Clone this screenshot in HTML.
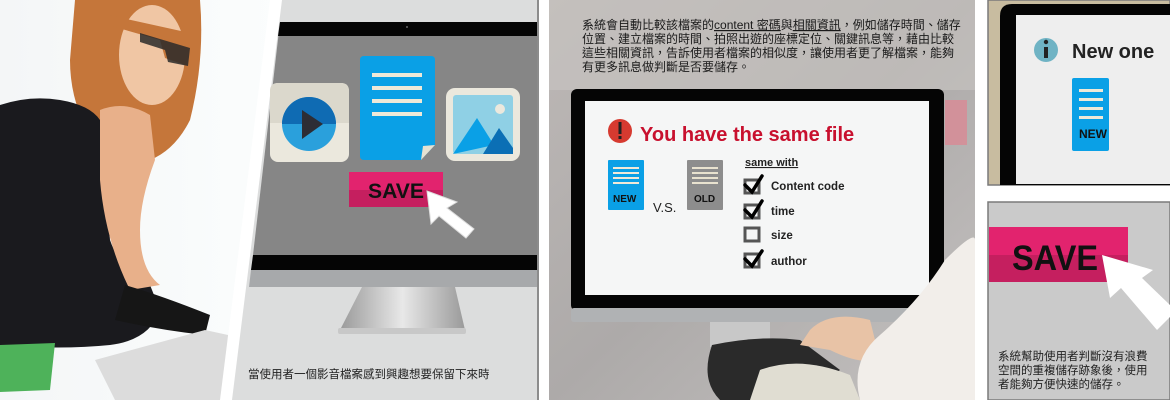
<!DOCTYPE html>
<html><head><meta charset="utf-8"><style>
html,body{margin:0;padding:0;width:1170px;height:400px;overflow:hidden;background:#fff}
svg{display:block}
text{font-family:"Liberation Sans","Noto Sans CJK TC",sans-serif}
</style></head><body>
<svg width="1170" height="400" viewBox="0 0 1170 400" xmlns="http://www.w3.org/2000/svg">
<defs>
<linearGradient id="bg1" x1="0" y1="0" x2="1" y2="0"><stop offset="0" stop-color="#f4f6f7"/><stop offset="1" stop-color="#fbfdfd"/></linearGradient>
<linearGradient id="stand" x1="0" y1="0" x2="1" y2="0"><stop offset="0" stop-color="#9a9a9a"/><stop offset=".5" stop-color="#e8e8e8"/><stop offset="1" stop-color="#9a9a9a"/></linearGradient>
<linearGradient id="blur" x1="0" y1="0" x2="1" y2="1"><stop offset="0" stop-color="#bdb8b6"/><stop offset=".5" stop-color="#adaaa9"/><stop offset="1" stop-color="#c4c1c0"/></linearGradient>
</defs>
<!-- Panel 1 photo -->
<rect x="0" y="0" width="280" height="400" fill="url(#bg1)"/>
<path d="M75 0 L200 0 Q205 60 190 120 Q175 150 150 160 L100 150 Q70 110 70 60Z" fill="#c5763a"/>
<ellipse cx="152" cy="55" rx="33" ry="50" fill="#f0c6a4"/>
<path d="M108 15 L190 33 L188 66 L165 58 L160 40 L108 25Z" fill="#c5763a"/>
<path d="M140 33 L190 48 L188 66 L168 62 L165 50 L140 42Z" fill="#2a2a2a" opacity=".85"/>
<path d="M0 105 Q30 95 60 100 Q90 105 100 120 Q105 180 110 240 Q120 270 150 285 L160 310 Q150 340 110 345 Q60 350 0 345Z" fill="#1a1a1e"/>
<path d="M100 110 Q125 100 150 115 L155 160 Q140 200 140 230 Q140 270 160 285 L130 290 Q105 240 100 180Z" fill="#e8b08a"/>
<path d="M125 285 Q160 295 210 315 L205 335 Q160 330 115 320Z" fill="#161616"/>
<path d="M95 360 L205 330 L228 335 L226 400 L115 400Z" fill="#dcdcdc"/>
<path d="M0 345 L55 343 L50 390 L0 392Z" fill="#4eb25a"/>
<!-- white slant stripe -->
<polygon points="270,0 282,0 232,400 220,400" fill="#fff"/>
<!-- Panel 2 -->
<polygon points="282,0 538,0 538,400 232,400" fill="#dcdddd"/>
<polygon points="280,22 538,22 538,255 253,255" fill="#868686"/>
<polygon points="280,22 538,22 538,36 278,36" fill="#050505"/>
<circle cx="407" cy="27" r="1" fill="#666"/>
<polygon points="253,255 538,255 538,270 251,270" fill="#050505"/>
<polygon points="251,270 538,270 538,287 249,287" fill="#a7a9ab"/>
<polygon points="362,287 455,287 465,330 340,330" fill="url(#stand)"/>
<rect x="338" y="328" width="128" height="6" rx="2" fill="#c8c8c8"/>
<rect x="537" y="0" width="2" height="400" fill="#8c8c8c"/>
<!-- video icon -->
<rect x="270" y="83" width="79" height="79" rx="8" fill="#ebe8dd"/>
<path d="M270 123 H349 V91 Q349 83 341 83 H278 Q270 83 270 91Z" fill="#dbd8cc"/>
<circle cx="309" cy="124" r="27" fill="#2aa0dc"/>
<path d="M282 124 A27 27 0 0 1 336 124Z" fill="#0f6bb3"/>
<polygon points="302,110 302,139 323,124" fill="#2d2d35"/>
<!-- doc icon -->
<path d="M364 56 H431 Q435 56 435 60 V145 L421 160 H364 Q360 160 360 156 V60 Q360 56 364 56Z" fill="#0aa0e6"/>
<polygon points="421,160 435,145 423,146" fill="#e6e2d2"/>
<g fill="#efe9d8"><rect x="372" y="73" width="50" height="4"/><rect x="372" y="86" width="50" height="4"/><rect x="372" y="99" width="50" height="4"/><rect x="372" y="112" width="50" height="4"/></g>
<!-- image icon -->
<rect x="446" y="88" width="74" height="73" rx="9" fill="#ebe8dd"/>
<rect x="453" y="95" width="60" height="59" rx="3" fill="#8fd0e5"/>
<circle cx="500" cy="109" r="5" fill="#ebe8dd"/>
<path d="M453 154 L477 118 L494 145 Z" fill="#0aa0e6"/>
<path d="M483 154 L499 128 L513 148 V154Z" fill="#0b6fb5"/>
<!-- SAVE -->
<rect x="349" y="172" width="94" height="18" fill="#e2236e"/>
<rect x="349" y="190" width="94" height="17" fill="#c51f5f"/>
<text x="368" y="198" font-size="21" font-weight="bold" fill="#111" textLength="56" lengthAdjust="spacingAndGlyphs">SAVE</text>
<path d="M427 191 L431 224 L439 216 L466 238 L474 229 L447 208 L457 202Z" fill="#fff" stroke="#ddd" stroke-width="1"/>
<text x="248" y="378" font-size="11.5" fill="#222">當使用者一個影音檔案感到興趣想要保留下來時</text>
<!-- Panel 3 -->
<rect x="549" y="0" width="426" height="400" fill="url(#blur)"/>
<rect x="549" y="0" width="426" height="90" fill="#c8c4c2" opacity=".6"/>
<rect x="945" y="100" width="22" height="45" fill="#d98a95" opacity=".8"/>
<g font-size="12" fill="#1a1a1a">
<text x="582" y="29">系統會自動比較該檔案的<tspan text-decoration="underline">content 密碼</tspan>與<tspan text-decoration="underline">相關資訊</tspan>，例如儲存時間、儲存</text>
<text x="582" y="43">位置、建立檔案的時間、拍照出遊的座標定位、關鍵訊息等，藉由比較</text>
<text x="582" y="57">這些相關資訊，告訴使用者檔案的相似度，讓使用者更了解檔案，能夠</text>
<text x="582" y="71">有更多訊息做判斷是否要儲存。</text>
</g>
<rect x="571" y="89" width="373" height="222" rx="6" fill="#050505"/>
<rect x="571" y="308" width="373" height="14" rx="3" fill="#b0b2b4"/>
<rect x="585" y="101" width="344" height="194" fill="#f5f6f6"/>
<rect x="710" y="322" width="60" height="25" fill="#c8c8c8"/>
<!-- hand/keyboard -->
<path d="M712 345 Q760 335 800 340 L840 370 L800 400 L720 400 Q700 380 712 345Z" fill="#2a2a2a"/>
<path d="M760 370 Q800 355 850 375 L860 400 L750 400Z" fill="#e0ddd2"/>
<path d="M810 330 Q830 310 870 320 L880 360 Q860 365 830 350 L800 345Z" fill="#e8c3a6"/>
<path d="M945 260 Q975 230 975 240 L975 400 L860 400 Q850 360 880 335 Q920 300 945 260Z" fill="#f2eeea"/>
<circle cx="620" cy="131" r="12" fill="#d63a30"/>
<rect x="618.5" y="122" width="3" height="12" fill="#222"/><rect x="618.5" y="136" width="3" height="3" fill="#222"/>
<text x="640" y="141" font-size="20" fill="#c8102e" font-weight="bold">You have the same file</text>
<!-- NEW -->
<rect x="608" y="160" width="36" height="50" rx="1" fill="#0aa0e6"/>
<g fill="#efe9d8"><rect x="613" y="167" width="26" height="2"/><rect x="613" y="172" width="26" height="2"/><rect x="613" y="177" width="26" height="2"/><rect x="613" y="182" width="26" height="2"/></g>
<text x="613" y="202" font-size="10" font-weight="bold" fill="#111">NEW</text>
<text x="653" y="212" font-size="13" fill="#222">V.S.</text>
<rect x="687" y="160" width="36" height="50" rx="1" fill="#8d8d8d"/>
<g fill="#e8e2cf"><rect x="692" y="167" width="26" height="2"/><rect x="692" y="172" width="26" height="2"/><rect x="692" y="177" width="26" height="2"/><rect x="692" y="182" width="26" height="2"/></g>
<text x="694" y="202" font-size="10" font-weight="bold" fill="#111">OLD</text>
<text x="745" y="166" font-size="11" font-weight="bold" fill="#222" text-decoration="underline">same with</text>
<g fill="none" stroke="#555" stroke-width="3">
<rect x="745" y="180" width="14" height="13"/><rect x="745" y="205" width="14" height="13"/><rect x="745" y="228" width="14" height="13"/><rect x="745" y="254" width="14" height="13"/></g>
<g fill="none" stroke="#000" stroke-width="3.5" stroke-linecap="round">
<path d="M745 185 L752 192 L762 176"/><path d="M745 210 L752 217 L762 201"/><path d="M745 259 L752 266 L762 251"/></g>
<g font-size="11.5" font-weight="bold" fill="#222">
<text x="771" y="190">Content code</text><text x="771" y="215">time</text><text x="771" y="239">size</text><text x="771" y="265">author</text></g>
<!-- Panel 4 top -->
<rect x="988" y="0" width="182" height="185" fill="#c8bca0"/>
<rect x="988" y="0" width="182" height="185" fill="none" stroke="#7a7a7a" stroke-width="1.5"/>
<path d="M1000 185 V16 Q1000 4 1012 4 H1170 V185Z" fill="#050505"/>
<rect x="1016" y="15" width="154" height="169" fill="#eeeeee"/>
<circle cx="1046" cy="50" r="12" fill="#6fb3c4"/>
<rect x="1044" y="47" width="4" height="11" fill="#222"/><circle cx="1046" cy="42" r="2.2" fill="#222"/>
<text x="1072" y="58" font-size="20" font-weight="bold" fill="#222">New one</text>
<rect x="1072" y="78" width="37" height="73" rx="2" fill="#0aa0e6"/>
<g fill="#efe9d8"><rect x="1079" y="89" width="24" height="3"/><rect x="1079" y="98" width="24" height="3"/><rect x="1079" y="107" width="24" height="3"/><rect x="1079" y="116" width="24" height="3"/></g>
<text x="1079" y="138" font-size="12" font-weight="bold" fill="#111">NEW</text>
<!-- Panel 4 bottom -->
<rect x="988" y="202" width="182" height="198" fill="#cacaca" stroke="#7a7a7a" stroke-width="1.5"/>
<rect x="989" y="227" width="139" height="28" fill="#e2236e"/>
<rect x="989" y="255" width="139" height="27" fill="#c51f5f"/>
<text x="1012" y="270" font-size="35" font-weight="bold" fill="#111" textLength="86" lengthAdjust="spacingAndGlyphs">SAVE</text>
<path d="M1102 255 L1110 298 L1121 288 L1157 330 L1170 317 L1170 305 L1142 278 L1153 270Z" fill="#fff"/>
<g font-size="11.5" fill="#222"><text x="998" y="360">系統幫助使用者判斷沒有浪費</text><text x="998" y="374">空間的重複儲存跡象後，使用</text><text x="998" y="388">者能夠方便快速的儲存。</text></g>
</svg>
</body></html>
